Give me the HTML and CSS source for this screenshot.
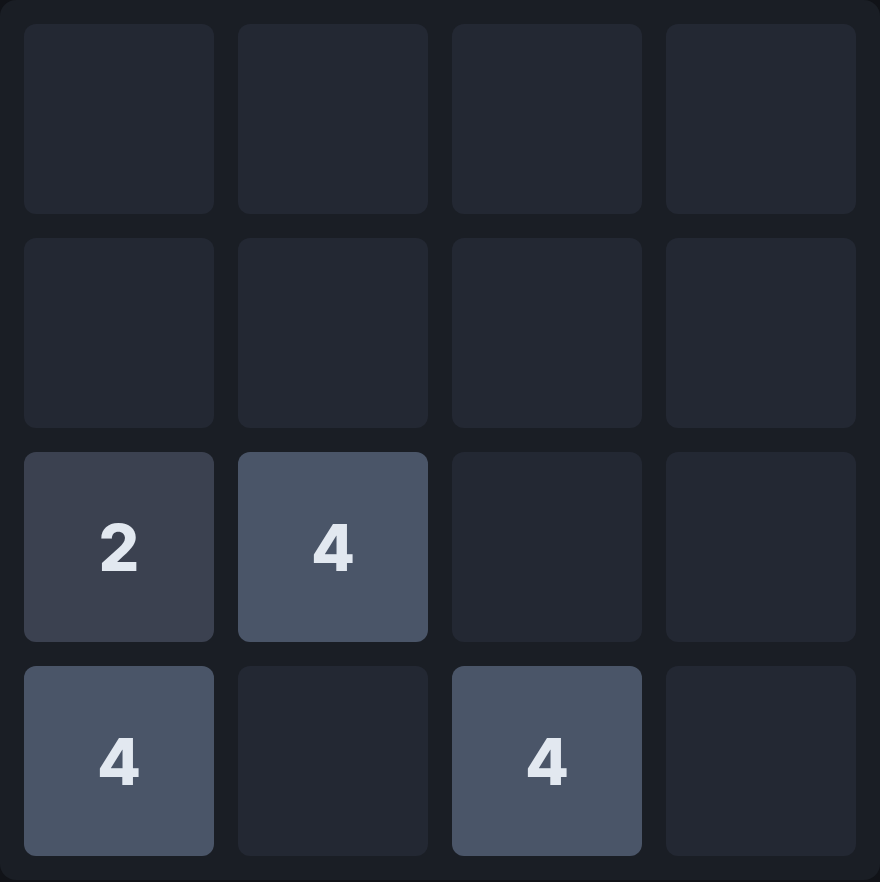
FILE: index.html
```html
<!DOCTYPE html>
<html lang="en">
<head>
  <meta charset="UTF-8">
  <title>2048</title>
  <link rel="stylesheet" href="styles.css">
</head>
<body>

  <div class="board">
    <div class="tile"></div>
    <div class="tile"></div>
    <div class="tile"></div>
    <div class="tile"></div>

    <div class="tile"></div>
    <div class="tile"></div>
    <div class="tile"></div>
    <div class="tile"></div>

    <div class="tile tile-2">2</div>
    <div class="tile tile-4">4</div>
    <div class="tile"></div>
    <div class="tile"></div>

    <div class="tile tile-4">4</div>
    <div class="tile"></div>
    <div class="tile tile-4">4</div>
    <div class="tile"></div>
  </div>

</body>
</html>
```

FILE: styles.css
```css
body {
  margin: 0;
  background-color: #111318;
  font-family: Inter, sans-serif;
}

.board {
  width: 880px;
  height: 880px;
  box-sizing: border-box;
  padding: 24px;
  background-color: #1a1e25;
  border-radius: 16px;
  display: grid;
  grid-template-columns: repeat(4, 190px);
  grid-template-rows: repeat(4, 190px);
  gap: 24px;
}

.tile {
  background-color: #232833;
  border-radius: 12px;
  display: flex;
  align-items: center;
  justify-content: center;
  color: #e2e8f0;
  font-size: 64px;
  font-weight: 800;
}

.tile-2 {
  background-color: #3b4150;
}

.tile-4 {
  background-color: #4a5568;
}
```
